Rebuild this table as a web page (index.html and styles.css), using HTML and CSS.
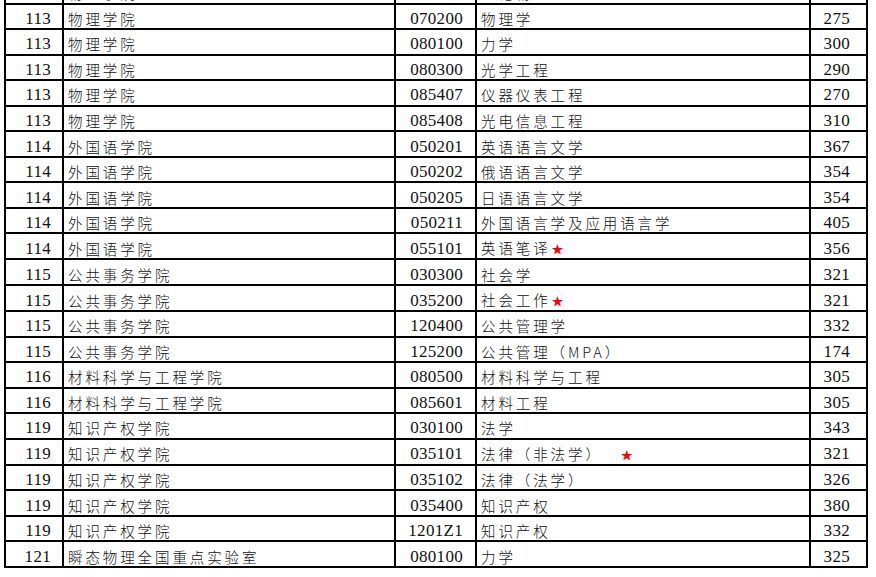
FILE: index.html
```html
<!DOCTYPE html>
<html lang="zh">
<head>
<meta charset="utf-8">
<title>分数线</title>
<link rel="stylesheet" href="styles.css">
</head>
<body>
<table class="grid">
  <colgroup>
    <col class="c-id"><col class="c-name"><col class="c-code"><col class="c-major"><col class="c-score">
  </colgroup>
  <tbody>
    <tr><td class="num id"></td><td class="txt">物理学院</td><td class="num code"></td><td class="txt">理论物理</td><td class="num score"></td></tr>
    <tr><td class="num id">113</td><td class="txt">物理学院</td><td class="num code">070200</td><td class="txt">物理学</td><td class="num score">275</td></tr>
    <tr><td class="num id">113</td><td class="txt">物理学院</td><td class="num code">080100</td><td class="txt">力学</td><td class="num score">300</td></tr>
    <tr><td class="num id">113</td><td class="txt">物理学院</td><td class="num code">080300</td><td class="txt">光学工程</td><td class="num score">290</td></tr>
    <tr><td class="num id">113</td><td class="txt">物理学院</td><td class="num code">085407</td><td class="txt">仪器仪表工程</td><td class="num score">270</td></tr>
    <tr><td class="num id">113</td><td class="txt">物理学院</td><td class="num code">085408</td><td class="txt">光电信息工程</td><td class="num score">310</td></tr>
    <tr><td class="num id">114</td><td class="txt">外国语学院</td><td class="num code">050201</td><td class="txt">英语语言文学</td><td class="num score">367</td></tr>
    <tr><td class="num id">114</td><td class="txt">外国语学院</td><td class="num code">050202</td><td class="txt">俄语语言文学</td><td class="num score">354</td></tr>
    <tr><td class="num id">114</td><td class="txt">外国语学院</td><td class="num code">050205</td><td class="txt">日语语言文学</td><td class="num score">354</td></tr>
    <tr><td class="num id">114</td><td class="txt">外国语学院</td><td class="num code">050211</td><td class="txt">外国语言学及应用语言学</td><td class="num score">405</td></tr>
    <tr><td class="num id">114</td><td class="txt">外国语学院</td><td class="num code">055101</td><td class="txt">英语笔译<span class="star">★</span></td><td class="num score">356</td></tr>
    <tr><td class="num id">115</td><td class="txt">公共事务学院</td><td class="num code">030300</td><td class="txt">社会学</td><td class="num score">321</td></tr>
    <tr><td class="num id">115</td><td class="txt">公共事务学院</td><td class="num code">035200</td><td class="txt">社会工作<span class="star">★</span></td><td class="num score">321</td></tr>
    <tr><td class="num id">115</td><td class="txt">公共事务学院</td><td class="num code">120400</td><td class="txt">公共管理学</td><td class="num score">332</td></tr>
    <tr><td class="num id">115</td><td class="txt">公共事务学院</td><td class="num code">125200</td><td class="txt">公共管理（MPA）</td><td class="num score">174</td></tr>
    <tr><td class="num id">116</td><td class="txt">材料科学与工程学院</td><td class="num code">080500</td><td class="txt">材料科学与工程</td><td class="num score">305</td></tr>
    <tr><td class="num id">116</td><td class="txt">材料科学与工程学院</td><td class="num code">085601</td><td class="txt">材料工程</td><td class="num score">305</td></tr>
    <tr><td class="num id">119</td><td class="txt">知识产权学院</td><td class="num code">030100</td><td class="txt">法学</td><td class="num score">343</td></tr>
    <tr><td class="num id">119</td><td class="txt">知识产权学院</td><td class="num code">035101</td><td class="txt">法律（非法学）<span class="star far">★</span></td><td class="num score">321</td></tr>
    <tr><td class="num id">119</td><td class="txt">知识产权学院</td><td class="num code">035102</td><td class="txt">法律（法学）</td><td class="num score">326</td></tr>
    <tr><td class="num id">119</td><td class="txt">知识产权学院</td><td class="num code">035400</td><td class="txt">知识产权</td><td class="num score">380</td></tr>
    <tr><td class="num id">119</td><td class="txt">知识产权学院</td><td class="num code">1201Z1</td><td class="txt">知识产权</td><td class="num score">332</td></tr>
    <tr><td class="num id">121</td><td class="txt">瞬态物理全国重点实验室</td><td class="num code">080100</td><td class="txt">力学</td><td class="num score">325</td></tr>
  </tbody>
</table>
</body>
</html>
```

FILE: styles.css
```css
html, body {
  margin: 0;
  padding: 0;
  background: #fff;
}

body {
  overflow: hidden;
}

.grid {
  border-collapse: collapse;
  table-layout: fixed;
  width: 862px;
  margin: -23px 0 0 4px;
  color: #111;
}

.c-id { width: 58px; }
.c-name { width: 332px; }
.c-code { width: 81px; }
.c-major { width: 334px; }
.c-score { width: 57px; }

.grid td {
  border: 2px solid #000;
  height: 25.55px;
  box-sizing: border-box;
  padding: 4px 0 0 0;
  white-space: nowrap;
  overflow: hidden;
  line-height: 19px;
}

.num {
  font-family: "Liberation Serif", serif;
  font-size: 17px;
  letter-spacing: 0.3px;
  text-align: right;
}

.id { padding-right: 11px !important; }
.code { padding-right: 12px !important; }
.score { padding-right: 16px !important; }

.txt {
  font-family: "Noto Sans CJK SC", sans-serif;
  font-weight: 300;
  font-size: 14.5px;
  letter-spacing: 2.9px;
  padding-left: 4px !important;
}

.star {
  color: #ff0000;
  font-size: 12px;
  letter-spacing: 0;
  margin-left: 1px;
}

.star.far {
  margin-left: 18px;
}
```
